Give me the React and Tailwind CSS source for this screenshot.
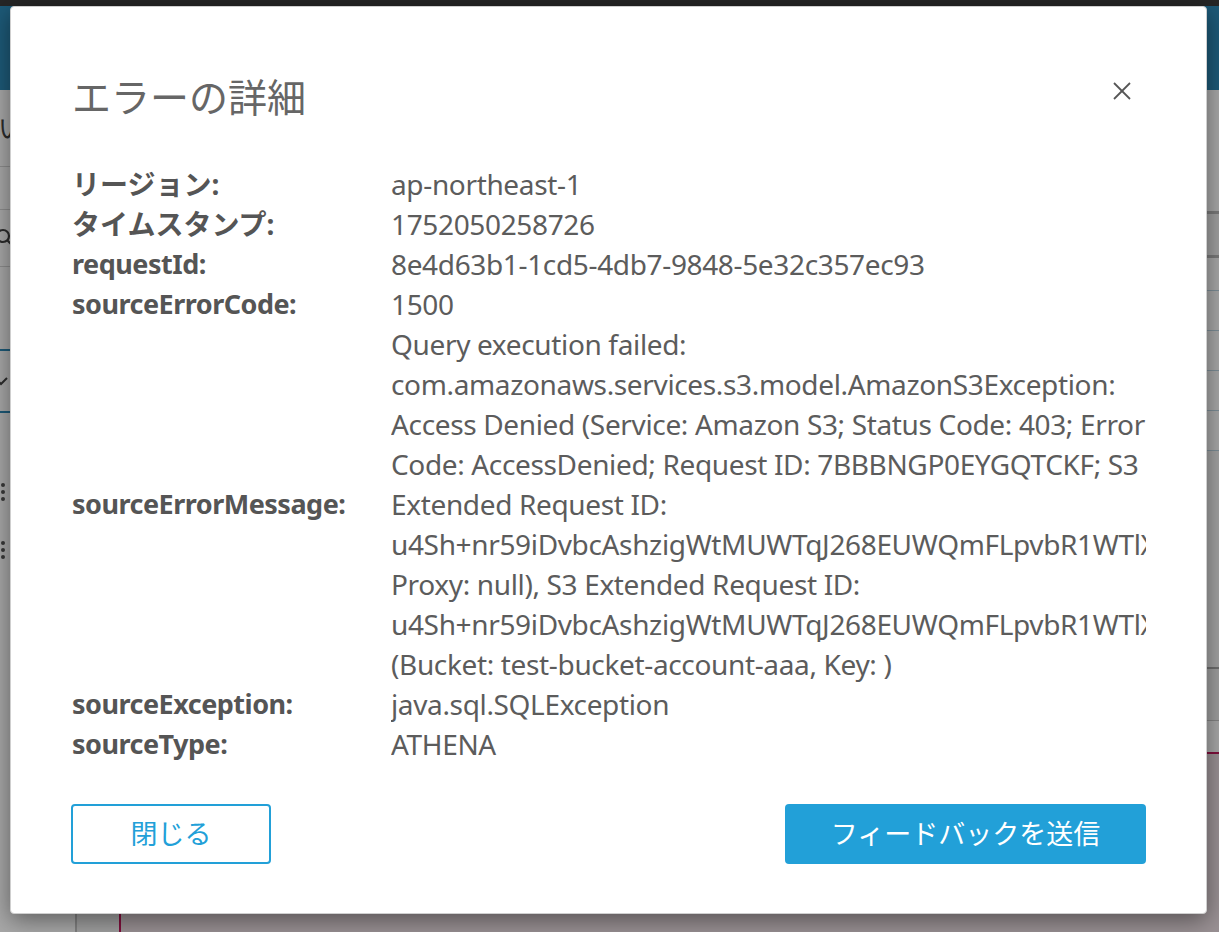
import React from "react";

const rows = [
  { label: "リージョン:", jp: true, lines: ["ap-northeast-1"] },
  { label: "タイムスタンプ:", jp: true, lines: ["1752050258726"] },
  { label: "requestId:", lines: ["8e4d63b1-1cd5-4db7-9848-5e32c357ec93"] },
  { label: "sourceErrorCode:", lines: ["1500"] },
  {
    label: "sourceErrorMessage:",
    lines: [
      "Query execution failed:",
      "com.amazonaws.services.s3.model.AmazonS3Exception:",
      "Access Denied (Service: Amazon S3; Status Code: 403; Error",
      "Code: AccessDenied; Request ID: 7BBBNGP0EYGQTCKF; S3",
      "Extended Request ID:",
      "u4Sh+nr59iDvbcAshzigWtMUWTqJ268EUWQmFLpvbR1WTlXk8Ypz3nQ=",
      "Proxy: null), S3 Extended Request ID:",
      "u4Sh+nr59iDvbcAshzigWtMUWTqJ268EUWQmFLpvbR1WTlXk8Ypz3nQ=",
      "(Bucket: test-bucket-account-aaa, Key: )",
    ],
  },
  { label: "sourceException:", lines: ["java.sql.SQLException"] },
  { label: "sourceType:", lines: ["ATHENA"] },
];

function Background() {
  return (
    <div className="flex h-full flex-col">
      <div className="h-[6px] bg-[#3a3a3a]" />
      <div className="h-[84px] bg-[#2c89b6]" />
      <div className="flex flex-1">
        {/* left sidebar */}
        <aside className="flex w-[77px] flex-col border-r-2 border-[#c4c4c4] bg-white">
          <div className="flex h-[77px] items-center border-b border-[#d6d6d6] text-[26px] leading-none text-[#444]">
            <span className="-ml-[2px]">い</span>
          </div>
          <div className="h-[43px] border-b border-[#d6d6d6]" />
          <div className="flex h-[57px] items-center border-b border-[#d6d6d6]">
            <svg width="16" height="20" viewBox="0 0 16 20" className="-ml-[4px]">
              <circle cx="7" cy="8" r="6" fill="none" stroke="#444" strokeWidth="2.2" />
              <line x1="11.5" y1="12.5" x2="15" y2="16" stroke="#444" strokeWidth="2.2" />
            </svg>
          </div>
          <div className="h-[82px]" />
          <div className="flex h-[64px] items-center border-y-2 border-[#2c89b6]">
            <svg width="14" height="10" viewBox="0 0 14 10" className="-ml-[6px]">
              <polyline points="1,2 7,8 13,2" fill="none" stroke="#444" strokeWidth="2" />
            </svg>
          </div>
          <div className="flex flex-col gap-[40px] pt-[70px] pl-[1px]">
            <div className="flex flex-col gap-[3px]">
              <span className="h-[4px] w-[4px] rounded-full bg-[#555]" />
              <span className="h-[4px] w-[4px] rounded-full bg-[#555]" />
              <span className="h-[4px] w-[4px] rounded-full bg-[#555]" />
            </div>
            <div className="flex flex-col gap-[3px]">
              <span className="h-[4px] w-[4px] rounded-full bg-[#555]" />
              <span className="h-[4px] w-[4px] rounded-full bg-[#555]" />
              <span className="h-[4px] w-[4px] rounded-full bg-[#555]" />
            </div>
          </div>
        </aside>
        {/* main */}
        <main className="flex flex-1 flex-col bg-white">
          <div className="flex flex-1">
            <div className="flex-1" />
            <div className="flex w-[60px] flex-col">
              <div className="h-[121px]" />
              <div className="flex h-[47px] items-center border-y-[3px] border-[#b9b9b9] bg-[#f3f3f3] pl-[12px] text-[22px] text-[#555]">ス</div>
              <div className="h-[33px] border-b border-[#bcd6e4]" />
              <div className="h-[40px] border-b border-[#bcd6e4]" />
              <div className="h-[40px] border-b border-[#bcd6e4]" />
              <div className="h-[40px] border-b border-[#bcd6e4]" />
              <div className="h-[40px] border-b border-[#bcd6e4]" />
              <div className="h-[218px] border-b-2 border-[#a9a9a9] bg-[#f7f7f7]" />
              <div className="h-[52px] border-b border-[#c8c8c8] bg-[#f0f0f0]" />
            </div>
          </div>
          <div className="flex h-[180px]">
            <div className="w-[42px] bg-[#f2f2f2]" />
            <div className="flex-1 border-l-2 border-t-2 border-[#c2185b] bg-[#eadde1]" />
          </div>
        </main>
      </div>
    </div>
  );
}

export default function App() {
  return (
    <div className="relative h-[932px] w-[1219px] overflow-hidden bg-white font-['Noto_Sans','Noto_Sans_CJK_JP',sans-serif]">
      <Background />
      <div className="absolute inset-0 bg-black/[0.34]" />

      <div className="absolute left-[10px] top-[6px] flex h-[908px] w-[1197px] flex-col rounded-[4px] border border-[#cfcfcf] bg-white pl-[61px] pr-[60px] pt-[67px] shadow-[0_6px_24px_rgba(0,0,0,0.45)]">
        <button className="absolute right-[75px] top-[75px] h-[18px] w-[18px]" aria-label="close">
          <svg width="18" height="18" viewBox="0 0 18 18">
            <line x1="1" y1="1" x2="17" y2="17" stroke="#555" strokeWidth="1.8" />
            <line x1="17" y1="1" x2="1" y2="17" stroke="#555" strokeWidth="1.8" />
          </svg>
        </button>

        <h2 className="text-[39px] font-normal leading-[45px] text-[#666]">エラーの詳細</h2>

        <div className="mt-[45px] grid grid-cols-[319px_1fr] items-center leading-[40px]">
          {rows.map((r) => (
            <React.Fragment key={r.label}>
              <div
                className={
                  r.jp
                    ? "text-[28px] font-bold text-[#555]"
                    : "text-[27px] font-bold tracking-[-0.5px] text-[#555]"
                }
              >
                {r.label}
              </div>
              <div className="overflow-hidden pr-[4px] text-[28px] tracking-[-0.35px] text-[#5c5c5c]">
                {r.lines.map((l, i) => (
                  <div key={i} className="whitespace-nowrap">{l}</div>
                ))}
              </div>
            </React.Fragment>
          ))}
        </div>

        <div className="mt-[40px] flex items-center justify-between">
          <button className="-ml-px h-[60px] w-[200px] rounded-[4px] border-2 border-[#22a0d8] bg-white text-[27px] text-[#22a0d8]">
            閉じる
          </button>
          <button className="h-[60px] w-[361px] rounded-[4px] bg-[#22a0d8] text-[27px] text-white">
            フィードバックを送信
          </button>
        </div>
      </div>
    </div>
  );
}
